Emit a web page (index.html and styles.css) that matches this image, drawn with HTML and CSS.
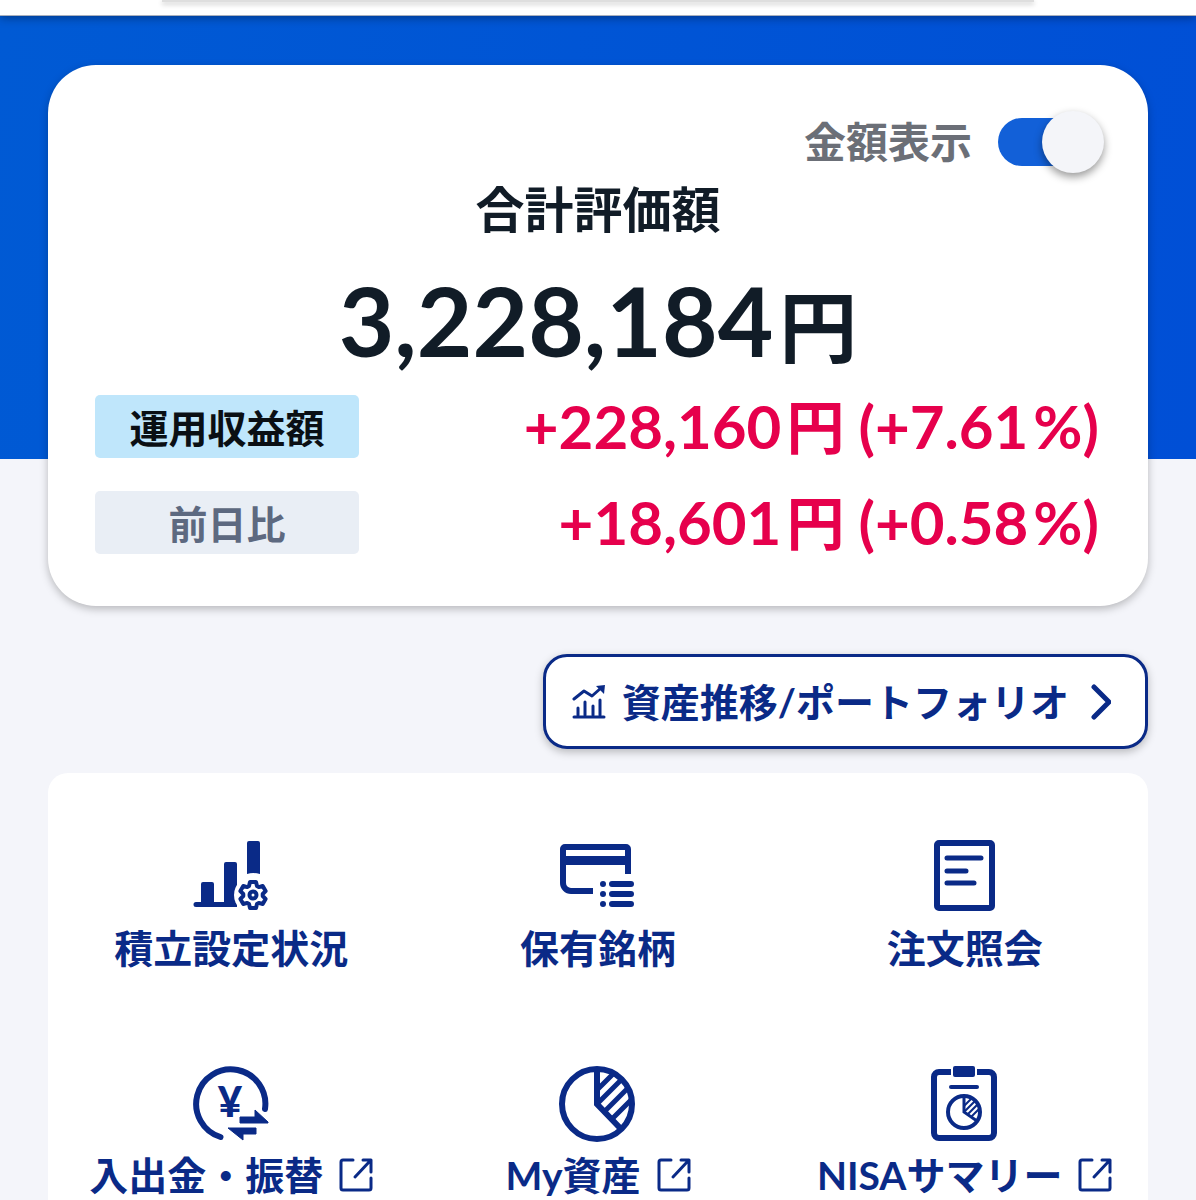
FILE: index.html
```html
<!DOCTYPE html>
<html lang="ja">
<head>
  <meta charset="UTF-8" />
  <meta name="viewport" content="width=device-width, initial-scale=1.0" />
  <title>資産サマリー</title>
  <link rel="stylesheet" href="styles.css">
</head>
<body>
  <svg class="defs" aria-hidden="true">
    <symbol id="external" viewBox="0 0 34 34">
      <g fill="none" stroke="currentColor" stroke-width="3" stroke-linecap="round" stroke-linejoin="round">
        <path d="M14 2H4a2 2 0 0 0-2 2v26a2 2 0 0 0 2 2h26a2 2 0 0 0 2-2V20" />
        <path d="M24 2h8v12M31 3L16 19" />
      </g>
    </symbol>
  </svg>

  <header class="header">
    <div class="header-tab"></div>
  </header>

  <main class="content">
    <section class="summary">
      <div class="toggle-row">
        <label for="amount">金額表示</label>
        <input type="checkbox" id="amount" class="toggle" checked>
      </div>
      <h1>合計評価額</h1>
      <p class="total">3,228,184<span>円</span></p>

      <dl class="profit">
        <dt class="tag tag-main">運用収益額</dt>
        <dd><span>+228,160</span><span class="yen">円</span><span>(+7.61</span><span class="percent">%)</span></dd>
        <dt class="tag">前日比</dt>
        <dd><span>+18,601</span><span class="yen">円</span><span>(+0.58</span><span class="percent">%)</span></dd>
      </dl>
    </section>

    <a class="portfolio" href="#">
      <svg class="chart-icon" viewBox="0 0 34 34" aria-hidden="true">
        <g fill="none" stroke="currentColor" stroke-width="3" stroke-linecap="round" stroke-linejoin="round">
          <path d="M2 32H32M6 30V23M13 30V17M21 30V21M28 30V15" />
          <path d="M2 14L12 6L20 11L29 3" />
        </g>
        <path d="M24 1L33 0L32 9Z" fill="currentColor" />
      </svg>
      <span>資産推移/ポートフォリオ</span>
      <svg class="arrow" viewBox="0 0 20 36" aria-hidden="true">
        <path d="M3 3L18 18L3 33" fill="none" stroke="currentColor" stroke-width="5" stroke-linecap="round" stroke-linejoin="round" />
      </svg>
    </a>

    <nav class="menu">
      <a href="#">
        <svg class="icon" viewBox="0 0 80 80" aria-hidden="true">
          <path d="M5 66H10V48a2 2 0 0 1 2-2h9a2 2 0 0 1 2 2V66H33V28a2 2 0 0 1 2-2h9a2 2 0 0 1 2 2V71H5a2.500 2.500 0 0 1 0-5Z" fill="currentColor" />
          <circle cx="62" cy="59" r="19" fill="#fff" />
          <path d="M56 38V7a2 2 0 0 1 2-2h9a2 2 0 0 1 2 2V38Q62 36 56 38Z" fill="currentColor" />
          <g transform="translate(62 59)" fill="none" stroke="currentColor" stroke-width="4" stroke-linejoin="round">
            <path d="M-4 -9L-3 -12.900H3L4 -9L5.800 -7.900L9.700 -9L12.600 -3.900L9.700 -1V1L12.600 3.900L9.700 9L5.800 7.900L4 9L3 12.900H-3L-4 9L-5.800 7.900L-9.700 9L-12.600 3.900L-9.700 1V-1L-12.600 -3.900L-9.700 -9L-5.800 -7.900Z" />
            <circle r="3.500" />
          </g>
        </svg>
        <span class="label">積立設定状況</span>
      </a>

      <a href="#">
        <svg class="icon" viewBox="0 0 80 80" aria-hidden="true">
          <path d="M35 55H13a8 8 0 0 1-8-8V13a2 2 0 0 1 2-2H68a2 2 0 0 1 2 2V38" fill="none" stroke="currentColor" stroke-width="6" />
          <path d="M5 20H70V29H5Z" fill="currentColor" />
          <path d="M45 48h0M45 58h0M45 68h0M54 48H73M54 58H73M54 68H73" fill="none" stroke="currentColor" stroke-width="6" stroke-linecap="round" />
        </svg>
        <span class="label">保有銘柄</span>
      </a>

      <a href="#">
        <svg class="icon" viewBox="0 0 80 80" aria-hidden="true">
          <rect x="12" y="7" width="55" height="65" rx="2" fill="none" stroke="currentColor" stroke-width="6" />
          <path d="M22 22H56M22 35H41M22 47H49" fill="none" stroke="currentColor" stroke-width="5" stroke-linecap="round" />
        </svg>
        <span class="label">注文照会</span>
      </a>

      <a href="#">
        <svg class="icon" viewBox="0 0 80 80" aria-hidden="true">
          <path d="M74 46A34.600 34.600 0 1 0 29.500 74" fill="none" stroke="currentColor" stroke-width="6" stroke-linecap="round" />
          <text class="yen-mark" x="39" y="54" text-anchor="middle">¥</text>
          <path d="M49 60V54H64V47L77 59V60ZM37 65H65V71H52V77Z" fill="currentColor" stroke="currentColor" stroke-linejoin="round" />
        </svg>
        <span class="label">入出金・振替<svg class="external" aria-hidden="true"><use href="#external" /></svg></span>
      </a>

      <a href="#">
        <svg class="icon" viewBox="0 0 80 80" aria-hidden="true">
          <clipPath id="slice"><path d="M39 41V6A35 35 0 0 1 63 65Z" /></clipPath>
          <g fill="none" stroke="currentColor">
            <circle cx="39" cy="41" r="35" stroke-width="6" />
            <path d="M39 6V41L63 66" stroke-width="6" />
            <path clip-path="url(#slice)" d="M36 30L66 0M36 44L80 0M36 59L90 5M36 74L96 14" stroke-width="5" />
          </g>
        </svg>
        <span class="label">My資産<svg class="external" aria-hidden="true"><use href="#external" /></svg></span>
      </a>

      <a href="#">
        <svg class="icon" viewBox="0 0 80 80" aria-hidden="true">
          <clipPath id="slice-small"><path d="M39 49V33A16 16 0 0 1 52 59Z" /></clipPath>
          <rect x="9" y="9" width="60" height="66" rx="5" fill="none" stroke="currentColor" stroke-width="6" />
          <path d="M26 2H52V15H26Z" fill="#fff" />
          <rect x="28" y="3" width="22" height="11" rx="2" fill="currentColor" />
          <g fill="none" stroke="currentColor">
            <path d="M26 24H52" stroke-width="4" stroke-linecap="round" />
            <circle cx="39" cy="49" r="16" stroke-width="4" />
            <path d="M39 33V49L52 58" stroke-width="3" />
            <path clip-path="url(#slice-small)" d="M36 46L56 26M36 52L62 26M36 58L66 28M36 64L66 34" stroke-width="2" />
          </g>
        </svg>
        <span class="label">NISAサマリー<svg class="external" aria-hidden="true"><use href="#external" /></svg></span>
      </a>
    </nav>
  </main>
</body>
</html>
```
FILE: styles.css
```css
:root {
  --navy: #0a2a87;
  --blue: #1260d8;
  --red: #e6004c;
  --bg: #f4f5fa;
  --text: #111c27;
}

* {
  box-sizing: border-box;
}

body {
  margin: 0;
  font-family: Lato, 'Noto Sans CJK JP', sans-serif;
  font-weight: 700;
  font-size: 39px;
  line-height: 48px;
  color: var(--text);
  background-color: var(--bg);
}

a {
  color: var(--navy);
  text-decoration: none;
}

.defs {
  display: none;
}

.header {
  position: relative;
  height: 16px;
  background: #fff;
  border-bottom: 1px solid #a9b0bd;
  box-shadow: 0 2px 10px rgba(0, 0, 0, 0.35);
}

.header-tab {
  height: 2px;
  margin: 0 162px;
  background: #dedede;
  box-shadow: 0 2px 5px rgba(0, 0, 0, 0.3);
}

.content {
  padding: 49px 48px 0;
  background: linear-gradient(100deg, #005ad4, #004fd6) no-repeat;
  background-size: 100% 443px;
}

.summary {
  padding: 46px 47px 52px;
  background: #fff;
  border-radius: 48px;
  box-shadow: 0 3px 8px rgba(0, 0, 0, 0.25);
}

.toggle-row {
  display: flex;
  justify-content: flex-end;
  align-items: center;
  gap: 26px;
  margin-right: -3px;
  font-size: 42px;
  color: #6b6f77;
}

.toggle {
  appearance: none;
  position: relative;
  width: 106px;
  height: 62px;
  margin: 0;
  cursor: pointer;
}

.toggle::before {
  content: '';
  position: absolute;
  inset: 7px 14px 7px 0;
  border-radius: 24px;
  background: var(--blue);
}

.toggle::after {
  content: '';
  position: absolute;
  top: 0;
  right: 0;
  width: 62px;
  height: 62px;
  border-radius: 50%;
  background: #f4f5f9;
  box-shadow: 0 4px 8px rgba(0, 0, 0, 0.4);
}

.toggle:not(:checked)::before {
  background: #b8bcc6;
}

.toggle:not(:checked)::after {
  right: 44px;
}

h1 {
  margin: 6px 0 0;
  font-size: 49px;
  line-height: 60px;
  text-align: center;
}

.total {
  display: flex;
  justify-content: center;
  align-items: baseline;
  gap: 6px;
  margin: 21px 0 15px;
  font-size: 96px;
  line-height: 120px;
}

.total span {
  font-size: 78px;
  line-height: 1;
}

.profit {
  display: grid;
  grid-template-columns: 264px 1fr;
  row-gap: 33px;
  margin: 0;
}

.tag {
  height: 63px;
  border-radius: 5px;
  line-height: 66px;
  text-align: center;
  color: #5d6980;
  background: #e9eef5;
}

.tag-main {
  color: #0a0f14;
  background: #bfe6fb;
}

.profit dd {
  display: flex;
  justify-content: flex-end;
  align-items: baseline;
  height: 63px;
  margin: 0 2px 0 0;
  font-size: 60px;
  line-height: 62px;
  color: var(--red);
}

.profit .yen {
  margin: 0 14px 0 5px;
  font-size: 58px;
}

.percent {
  margin-left: 5px;
}

.portfolio {
  display: flex;
  align-items: center;
  gap: 16px;
  width: fit-content;
  margin: 48px 0 24px auto;
  padding: 21px 34px 20px 26px;
  background: #fff;
  border: 3px solid var(--navy);
  border-radius: 24px;
  box-shadow: 0 3px 8px rgba(0, 0, 0, 0.25);
}

.chart-icon {
  width: 34px;
  height: 34px;
}

.arrow {
  width: 20px;
  height: 36px;
  margin-left: 6px;
}

.menu {
  display: grid;
  grid-template-columns: repeat(3, 1fr);
  row-gap: 91px;
  padding: 63px 0 48px;
  background: #fff;
  border-radius: 20px;
}

.menu a {
  display: flex;
  flex-direction: column;
  align-items: center;
  gap: 8px;
}

.icon {
  width: 80px;
  height: 80px;
}

.label {
  display: flex;
  align-items: center;
  gap: 16px;
}

.external {
  width: 34px;
  height: 34px;
}

.yen-mark {
  font-size: 42px;
  font-weight: 900;
  fill: currentColor;
}
```
